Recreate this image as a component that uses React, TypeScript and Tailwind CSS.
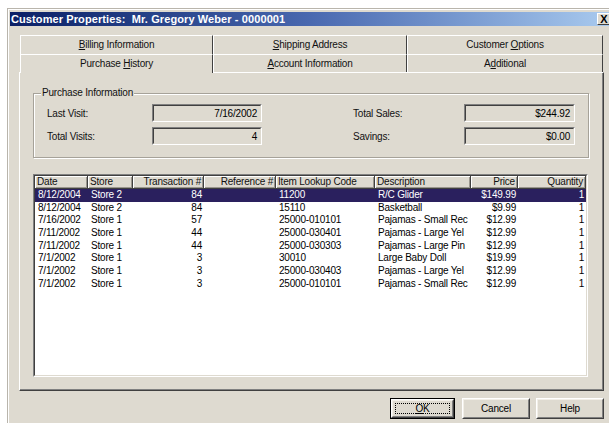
import React from "react";

type Col = { label: string; w: string; right: boolean };

const cols: Col[] = [
  { label: "Date", w: "w-[53px]", right: false },
  { label: "Store", w: "w-[45px]", right: false },
  { label: "Transaction #", w: "w-[71px]", right: true },
  { label: "Reference #", w: "w-[72px]", right: true },
  { label: "Item Lookup Code", w: "w-[99px]", right: false },
  { label: "Description", w: "w-[96px]", right: false },
  { label: "Price", w: "w-[47px]", right: true },
  { label: "Quantity", w: "w-[68px]", right: true },
];

const rows: string[][] = [
  ["8/12/2004", "Store 2", "84", "", "11200", "R/C Glider", "$149.99", "1"],
  ["8/12/2004", "Store 2", "84", "", "15110", "Basketball", "$9.99", "1"],
  ["7/16/2002", "Store 1", "57", "", "25000-010101", "Pajamas - Small Rec", "$12.99", "1"],
  ["7/11/2002", "Store 1", "44", "", "25000-030401", "Pajamas - Large Yel", "$12.99", "1"],
  ["7/11/2002", "Store 1", "44", "", "25000-030303", "Pajamas - Large Pin", "$12.99", "1"],
  ["7/1/2002", "Store 1", "3", "", "30010", "Large Baby Doll", "$19.99", "1"],
  ["7/1/2002", "Store 1", "3", "", "25000-030403", "Pajamas - Large Yel", "$12.99", "1"],
  ["7/1/2002", "Store 1", "3", "", "25000-010101", "Pajamas - Small Rec", "$12.99", "1"],
];

function Tab({ w, children, selected }: { w: string; children: React.ReactNode; selected?: boolean }) {
  return (
    <div
      className={`${w} ${
        selected ? "h-[19px] relative z-10 bg-[#dedad0]" : "h-full"
      } flex items-start justify-center pt-[3px] border-t border-l border-white border-r border-r-[#404040] leading-[12px]`}
    >
      <span>{children}</span>
    </div>
  );
}

function Field({ value }: { value: string }) {
  return (
    <div className="h-[18px] flex-1 border border-t-[#808080] border-l-[#808080] border-r-white border-b-white">
      <div className="h-full border border-t-[#404040] border-l-[#404040] border-r-[#dedad0] border-b-[#dedad0] flex items-center justify-end pr-[3px] text-black">
        {value}
      </div>
    </div>
  );
}

function Button({ children, w, isDefault }: { children: React.ReactNode; w: string; isDefault?: boolean }) {
  return (
    <div className={`${w} h-[21px] ${isDefault ? "border border-black" : ""}`}>
      <div className="h-full border border-t-white border-l-white border-r-[#404040] border-b-[#404040]">
        <div className="h-full border border-t-[#f2efe8] border-l-[#f2efe8] border-r-[#808080] border-b-[#808080] flex items-center justify-center p-[2px]">
          <div
            className={`w-full h-full flex items-center justify-center ${
              isDefault ? "border border-dotted border-black" : ""
            }`}
          >
            {children}
          </div>
        </div>
      </div>
    </div>
  );
}

export default function App() {
  return (
    <div className="w-[609px] h-[423px] overflow-hidden bg-white pt-[8px] pl-[7px] font-['Liberation_Sans',Arial,sans-serif] text-[10px] tracking-[-0.2px] text-[#111]">
      <div className="w-[612px] h-[420px] bg-[#dedad0] border-l border-t border-[#b9b5ac] shadow-[inset_1px_1px_0_#ffffff] pt-[3px] pl-[2px]">
        {/* caption */}
        <div className="w-[603px] h-[14px] flex items-center justify-between bg-gradient-to-r from-[#0b1f66] via-[#4a69b0] to-[#aacbef] pl-[1px]">
          <span className="text-white font-bold text-[11px] tracking-[0.1px] whitespace-pre leading-[14px]">
            {"Customer Properties:  Mr. Gregory Weber - 0000001"}
          </span>
          <div className="w-[14px] h-[12px] mr-[2px] bg-[#dedad0] border border-t-white border-l-white border-r-[#404040] border-b-[#404040] flex items-center justify-center">
            <span className="font-bold text-[11px] leading-[10px] text-black tracking-normal">X</span>
          </div>
        </div>

        {/* tab strip */}
        <div className="mt-[9px] ml-[10px] flex h-[19px]">
          <Tab w="w-[193px]">
            <u>B</u>illing Information
          </Tab>
          <Tab w="w-[194px]">
            <u>S</u>hipping Address
          </Tab>
          <Tab w="w-[196px]">
            Customer <u>O</u>ptions
          </Tab>
        </div>
        <div className="ml-[10px] flex items-start h-[18px]">
          <Tab w="w-[193px]" selected>
            Purchase <u>H</u>istory
          </Tab>
          <Tab w="w-[194px]">
            <u>A</u>ccount Information
          </Tab>
          <Tab w="w-[196px]">
            A<u>d</u>ditional
          </Tab>
        </div>

        {/* tab page */}
        <div className="ml-[9px] w-[585px] h-[319px] border-l border-t border-white border-r border-b border-r-[#404040] border-b-[#404040] shadow-[inset_-1px_-1px_0_#808080] pl-[13px]">
          {/* group box */}
          <div className="mt-[20px] w-[556px] h-[65px] border border-[#a6a299] shadow-[inset_1px_1px_0_#ffffff,1px_1px_0_#ffffff]">
            <div className="-mt-[7px] ml-[7px] w-fit px-[1px] bg-[#dedad0] leading-[12px]">Purchase Information</div>
            <div className="mt-[5px] flex flex-col gap-[5px] pl-[13px]">
              <div className="flex items-center h-[18px]">
                <span className="w-[105px]">Last Visit:</span>
                <div className="w-[110px] flex">
                  <Field value="7/16/2002" />
                </div>
                <span className="w-[91px]" />
                <span className="w-[111px]">Total Sales:</span>
                <div className="w-[111px] flex">
                  <Field value="$244.92" />
                </div>
              </div>
              <div className="flex items-center h-[18px]">
                <span className="w-[105px]">Total Visits:</span>
                <div className="w-[110px] flex">
                  <Field value="4" />
                </div>
                <span className="w-[91px]" />
                <span className="w-[111px]">Savings:</span>
                <div className="w-[111px] flex">
                  <Field value="$0.00" />
                </div>
              </div>
            </div>
          </div>

          {/* list view */}
          <div className="mt-[16px] w-[555px] h-[203px] border border-t-[#808080] border-l-[#808080] border-r-white border-b-white">
            <div className="h-full border border-t-[#404040] border-l-[#404040] border-r-[#dedad0] border-b-[#dedad0] bg-white overflow-hidden">
              <div className="flex h-[13px] bg-[#dedad0]">
                {cols.map((c) => (
                  <div
                    key={c.label}
                    className={`${c.w} shrink-0 h-full border-r border-b border-[#404040] shadow-[inset_1px_1px_0_#ffffff,inset_-1px_-1px_0_#9a968e] leading-[12px] whitespace-nowrap overflow-hidden ${
                      c.right ? "text-right pr-[2px]" : "pl-[2px]"
                    }`}
                  >
                    {c.label}
                  </div>
                ))}
              </div>
              {rows.map((r, i) => (
                <div
                  key={i}
                  className={`flex h-[12.7px] leading-[12.7px] ${
                    i === 0 ? "bg-[#2a205e] text-white" : "text-black"
                  }`}
                >
                  {r.map((v, j) => (
                    <div
                      key={j}
                      className={`${cols[j].w} shrink-0 whitespace-nowrap overflow-hidden ${
                        cols[j].right ? "text-right pr-[2px]" : "pl-[3px]"
                      }`}
                    >
                      {v}
                    </div>
                  ))}
                </div>
              ))}
            </div>
          </div>
        </div>

        {/* dialog buttons */}
        <div className="mt-[7px] ml-[380px] flex text-black">
          <Button w="w-[65px]" isDefault>
            <span>
              <u>O</u>K
            </span>
          </Button>
          <div className="w-[7px]" />
          <Button w="w-[68px]">Cancel</Button>
          <div className="w-[6px]" />
          <Button w="w-[68px]">Help</Button>
        </div>
      </div>
    </div>
  );
}
